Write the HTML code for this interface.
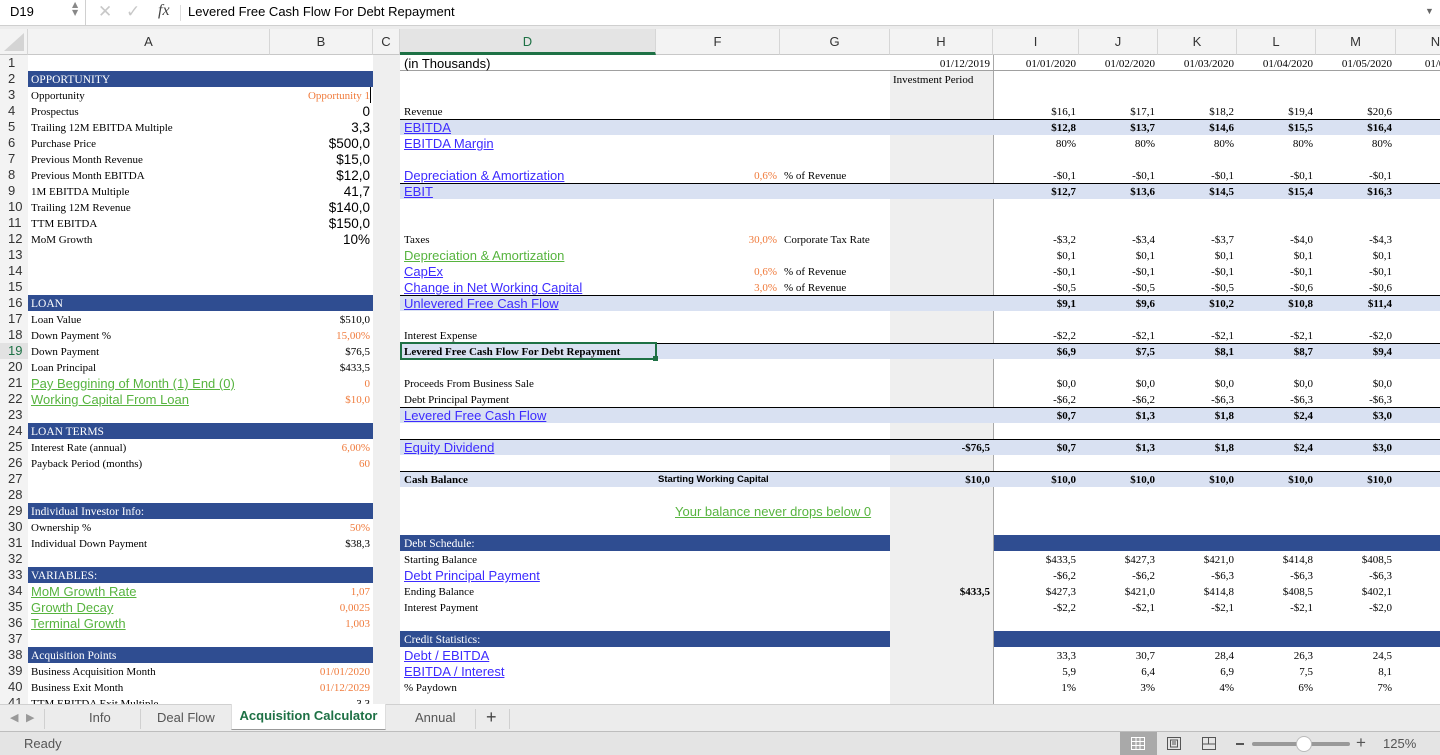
<!DOCTYPE html>
<html><head><meta charset="utf-8"><style>
*{margin:0;padding:0;box-sizing:border-box}
body{width:1440px;height:755px;overflow:hidden;position:relative;background:#fff;font-family:"Liberation Serif",serif;font-size:11px;color:#000}
.ab{position:absolute}
.rw{position:absolute;left:0;width:1440px;height:16px;line-height:16px}
.rw span{position:absolute;top:1px;white-space:nowrap}
.rw span.n{top:0}
.n{left:0;width:28px;padding-left:8px;font-family:"Liberation Sans",sans-serif;font-size:13px;color:#333;background:#f3f3f3}
.a{left:31px}
.bv{left:250px;width:120px;text-align:right}
.d{left:404px}
.h{left:890px;width:100px;text-align:right}
.i{left:976px;width:100px;text-align:right}
.j{left:1055px;width:100px;text-align:right}
.k{left:1134px;width:100px;text-align:right}
.l{left:1213px;width:100px;text-align:right}
.m{left:1292px;width:100px;text-align:right}
.nn{left:1375px;width:100px;text-align:right}
.fp{left:680px;width:97px;text-align:right;color:#f07b3c}
.fl{left:784px}
.s{font-family:"Liberation Sans",sans-serif;font-size:13.5px}
.lk{font-family:"Liberation Sans",sans-serif;font-size:13px;color:#3d2bff;text-decoration:underline}
.gl{font-family:"Liberation Sans",sans-serif;font-size:13px;color:#57b43f;text-decoration:underline}
.o{color:#f07b3c}
.w{color:#fff;font-size:11.5px}
.b{font-weight:bold}
.lb{position:absolute;height:16px;background:#d9e1f2;border-top:1px solid #000}
.db{position:absolute;height:16px;background:#2f4d91}
.ch{position:absolute;top:29px;height:26px;line-height:26px;text-align:center;font-family:"Liberation Sans",sans-serif;font-size:13px;color:#333;border-right:1px solid #d6d6d6;background:#f3f3f3;border-bottom:1px solid #c8c8c8}
</style></head><body>
<div class="ab" style="left:0;top:0;width:1440px;height:26px;background:#fff;border-bottom:1px solid #cfcfcf"></div>
<div class="ab" style="left:10px;top:4px;font-family:'Liberation Sans',sans-serif;font-size:13px">D19</div>
<div class="ab" style="left:72px;top:1px;font-size:8px;color:#888;line-height:8px;font-family:'DejaVu Sans',sans-serif">▲<br>▼</div>
<div class="ab" style="left:85px;top:0;width:1px;height:25px;background:#d0d0d0"></div>
<div class="ab" style="left:98px;top:2px;font-size:17px;color:#c8c8c8;font-family:'DejaVu Sans',sans-serif">✕</div>
<div class="ab" style="left:126px;top:2px;font-size:17px;color:#c8c8c8;font-family:'DejaVu Sans',sans-serif">✓</div>
<div class="ab" style="left:158px;top:2px;font-size:16px;font-style:italic;color:#444;font-family:'Liberation Serif',serif">fx</div>
<div class="ab" style="left:180px;top:5px;width:1px;height:16px;background:#ddd"></div>
<div class="ab" style="left:188px;top:4px;font-family:'Liberation Sans',sans-serif;font-size:13px">Levered Free Cash Flow For Debt Repayment</div>
<div class="ab" style="left:1425px;top:6px;font-size:9px;color:#666">▼</div>
<div class="ab" style="left:0;top:26px;width:1440px;height:3px;background:#ececec"></div>
<div class="ch" style="left:0;width:28px;background:#f3f3f3"></div>
<div class="ab" style="left:4px;top:33px;width:0;height:0;border-left:20px solid transparent;border-bottom:18px solid #d4d4d4"></div>
<div class="ch" style="left:28px;width:242px">A</div>
<div class="ch" style="left:270px;width:103px">B</div>
<div class="ch" style="left:373px;width:27px">C</div>
<div class="ch" style="left:400px;width:256px;color:#1e7145;border-bottom:3px solid #1e7145;background:#e4e4e4">D</div>
<div class="ch" style="left:656px;width:124px">F</div>
<div class="ch" style="left:780px;width:110px">G</div>
<div class="ch" style="left:890px;width:103px">H</div>
<div class="ch" style="left:993px;width:86px">I</div>
<div class="ch" style="left:1079px;width:79px">J</div>
<div class="ch" style="left:1158px;width:79px">K</div>
<div class="ch" style="left:1237px;width:79px">L</div>
<div class="ch" style="left:1316px;width:80px">M</div>
<div class="ch" style="left:1396px;width:80px">N</div>
<div class="ab" style="left:0;top:55px;width:28px;height:650px;background:#f3f3f3;border-right:1px solid #d0d0d0"></div>
<div class="ab" style="left:373px;top:55px;width:27px;height:650px;background:#efefef"></div>
<div class="ab" style="left:890px;top:71px;width:103px;height:634px;background:#efefef"></div>
<div class="ab" style="left:993px;top:55px;width:1px;height:650px;background:#a8a8a8"></div>
<div class="ab" style="left:400px;top:70px;width:1040px;height:1px;background:#a0a0a0"></div>
<div class="ab" style="left:370px;top:87px;width:1px;height:16px;background:#000"></div>
<div class="lb" style="left:400px;top:119px;width:1040px"></div>
<div class="lb" style="left:400px;top:183px;width:1040px"></div>
<div class="lb" style="left:400px;top:295px;width:1040px"></div>
<div class="lb" style="left:400px;top:343px;width:1040px"></div>
<div class="lb" style="left:400px;top:407px;width:1040px"></div>
<div class="lb" style="left:400px;top:439px;width:1040px"></div>
<div class="lb" style="left:400px;top:471px;width:1040px"></div>
<div class="db" style="left:28px;top:71px;width:345px"></div>
<div class="db" style="left:28px;top:295px;width:345px"></div>
<div class="db" style="left:28px;top:423px;width:345px"></div>
<div class="db" style="left:28px;top:503px;width:345px"></div>
<div class="db" style="left:28px;top:567px;width:345px"></div>
<div class="db" style="left:28px;top:647px;width:345px"></div>
<div class="db" style="left:400px;top:535px;width:490px"></div>
<div class="db" style="left:994px;top:535px;width:446px"></div>
<div class="db" style="left:400px;top:631px;width:490px"></div>
<div class="db" style="left:994px;top:631px;width:446px"></div>
<div class="ab" style="left:400px;top:342px;width:257px;height:18px;border:2px solid #1e7145"></div>
<div class="ab" style="left:653px;top:356px;width:5px;height:5px;background:#1e7145"></div>
<div class="ab" style="left:26px;top:343px;width:2px;height:16px;background:#1e7145"></div>

<div class="rw" style="top:55px"><span class="n">1</span><span class="d s" style="font-size:13px">(in Thousands)</span><span class="h">01/12/2019</span><span class="i">01/01/2020</span><span class="j">01/02/2020</span><span class="k">01/03/2020</span><span class="l">01/04/2020</span><span class="m">01/05/2020</span><span class="nn">01/06/2020</span></div>
<div class="rw" style="top:71px"><span class="n">2</span><span class="a w">OPPORTUNITY</span><span style="left:893px">Investment Period</span></div>
<div class="rw" style="top:87px"><span class="n">3</span><span class="a">Opportunity</span><span class="bv o">Opportunity 1</span></div>
<div class="rw" style="top:103px"><span class="n">4</span><span class="a">Prospectus</span><span class="bv s">0</span><span class="d">Revenue</span><span class="i">$16,1</span><span class="j">$17,1</span><span class="k">$18,2</span><span class="l">$19,4</span><span class="m">$20,6</span></div>
<div class="rw" style="top:119px"><span class="n">5</span><span class="a">Trailing 12M EBITDA Multiple</span><span class="bv s">3,3</span><span class="d lk">EBITDA</span><span class="i b">$12,8</span><span class="j b">$13,7</span><span class="k b">$14,6</span><span class="l b">$15,5</span><span class="m b">$16,4</span></div>
<div class="rw" style="top:135px"><span class="n">6</span><span class="a">Purchase Price</span><span class="bv s">$500,0</span><span class="d lk">EBITDA Margin</span><span class="i">80%</span><span class="j">80%</span><span class="k">80%</span><span class="l">80%</span><span class="m">80%</span></div>
<div class="rw" style="top:151px"><span class="n">7</span><span class="a">Previous Month Revenue</span><span class="bv s">$15,0</span></div>
<div class="rw" style="top:167px"><span class="n">8</span><span class="a">Previous Month EBITDA</span><span class="bv s">$12,0</span><span class="d lk">Depreciation &amp; Amortization</span><span class="fp">0,6%</span><span class="fl">% of Revenue</span><span class="i">-$0,1</span><span class="j">-$0,1</span><span class="k">-$0,1</span><span class="l">-$0,1</span><span class="m">-$0,1</span></div>
<div class="rw" style="top:183px"><span class="n">9</span><span class="a">1M EBITDA Multiple</span><span class="bv s">41,7</span><span class="d lk">EBIT</span><span class="i b">$12,7</span><span class="j b">$13,6</span><span class="k b">$14,5</span><span class="l b">$15,4</span><span class="m b">$16,3</span></div>
<div class="rw" style="top:199px"><span class="n">10</span><span class="a">Trailing 12M Revenue</span><span class="bv s">$140,0</span></div>
<div class="rw" style="top:215px"><span class="n">11</span><span class="a">TTM EBITDA</span><span class="bv s">$150,0</span></div>
<div class="rw" style="top:231px"><span class="n">12</span><span class="a">MoM Growth</span><span class="bv s">10%</span><span class="d">Taxes</span><span class="fp">30,0%</span><span class="fl">Corporate Tax Rate</span><span class="i">-$3,2</span><span class="j">-$3,4</span><span class="k">-$3,7</span><span class="l">-$4,0</span><span class="m">-$4,3</span></div>
<div class="rw" style="top:247px"><span class="n">13</span><span class="d gl">Depreciation &amp; Amortization</span><span class="i">$0,1</span><span class="j">$0,1</span><span class="k">$0,1</span><span class="l">$0,1</span><span class="m">$0,1</span></div>
<div class="rw" style="top:263px"><span class="n">14</span><span class="d lk">CapEx</span><span class="fp">0,6%</span><span class="fl">% of Revenue</span><span class="i">-$0,1</span><span class="j">-$0,1</span><span class="k">-$0,1</span><span class="l">-$0,1</span><span class="m">-$0,1</span></div>
<div class="rw" style="top:279px"><span class="n">15</span><span class="d lk">Change in Net Working Capital</span><span class="fp">3,0%</span><span class="fl">% of Revenue</span><span class="i">-$0,5</span><span class="j">-$0,5</span><span class="k">-$0,5</span><span class="l">-$0,6</span><span class="m">-$0,6</span></div>
<div class="rw" style="top:295px"><span class="n">16</span><span class="a w">LOAN</span><span class="d lk">Unlevered Free Cash Flow</span><span class="i b">$9,1</span><span class="j b">$9,6</span><span class="k b">$10,2</span><span class="l b">$10,8</span><span class="m b">$11,4</span></div>
<div class="rw" style="top:311px"><span class="n">17</span><span class="a">Loan Value</span><span class="bv">$510,0</span></div>
<div class="rw" style="top:327px"><span class="n">18</span><span class="a">Down Payment %</span><span class="bv o">15,00%</span><span class="d">Interest Expense</span><span class="i">-$2,2</span><span class="j">-$2,1</span><span class="k">-$2,1</span><span class="l">-$2,1</span><span class="m">-$2,0</span></div>
<div class="rw" style="top:343px"><span class="n" style="color:#1e7145;background:#e2e2e2">19</span><span class="a">Down Payment</span><span class="bv">$76,5</span><span class="d b">Levered Free Cash Flow For Debt Repayment</span><span class="i b">$6,9</span><span class="j b">$7,5</span><span class="k b">$8,1</span><span class="l b">$8,7</span><span class="m b">$9,4</span></div>
<div class="rw" style="top:359px"><span class="n">20</span><span class="a">Loan Principal</span><span class="bv">$433,5</span></div>
<div class="rw" style="top:375px"><span class="n">21</span><span class="a gl">Pay Beggining of Month (1) End (0)</span><span class="bv o">0</span><span class="d">Proceeds From Business Sale</span><span class="i">$0,0</span><span class="j">$0,0</span><span class="k">$0,0</span><span class="l">$0,0</span><span class="m">$0,0</span></div>
<div class="rw" style="top:391px"><span class="n">22</span><span class="a gl">Working Capital From Loan</span><span class="bv o">$10,0</span><span class="d">Debt Principal Payment</span><span class="i">-$6,2</span><span class="j">-$6,2</span><span class="k">-$6,3</span><span class="l">-$6,3</span><span class="m">-$6,3</span></div>
<div class="rw" style="top:407px"><span class="n">23</span><span class="d lk">Levered Free Cash Flow </span><span class="i b">$0,7</span><span class="j b">$1,3</span><span class="k b">$1,8</span><span class="l b">$2,4</span><span class="m b">$3,0</span></div>
<div class="rw" style="top:423px"><span class="n">24</span><span class="a w">LOAN TERMS</span></div>
<div class="rw" style="top:439px"><span class="n">25</span><span class="a">Interest Rate (annual)</span><span class="bv o">6,00%</span><span class="d lk">Equity Dividend</span><span class="h b">-$76,5</span><span class="i b">$0,7</span><span class="j b">$1,3</span><span class="k b">$1,8</span><span class="l b">$2,4</span><span class="m b">$3,0</span></div>
<div class="rw" style="top:455px"><span class="n">26</span><span class="a">Payback Period (months)</span><span class="bv o">60</span></div>
<div class="rw" style="top:471px"><span class="n">27</span><span class="d b">Cash Balance</span><span style="left:658px;font-family:'Liberation Sans',sans-serif;font-size:9.5px;font-weight:bold">Starting Working Capital</span><span class="h b">$10,0</span><span class="i b">$10,0</span><span class="j b">$10,0</span><span class="k b">$10,0</span><span class="l b">$10,0</span><span class="m b">$10,0</span></div>
<div class="rw" style="top:487px"><span class="n">28</span></div>
<div class="rw" style="top:503px"><span class="n">29</span><span class="a w">Individual Investor Info:</span><span class="gl" style="left:675px">Your balance never drops below 0</span></div>
<div class="rw" style="top:519px"><span class="n">30</span><span class="a">Ownership %</span><span class="bv o">50%</span></div>
<div class="rw" style="top:535px"><span class="n">31</span><span class="a">Individual Down Payment</span><span class="bv">$38,3</span><span class="d w">Debt Schedule:</span></div>
<div class="rw" style="top:551px"><span class="n">32</span><span class="d">Starting Balance</span><span class="i">$433,5</span><span class="j">$427,3</span><span class="k">$421,0</span><span class="l">$414,8</span><span class="m">$408,5</span></div>
<div class="rw" style="top:567px"><span class="n">33</span><span class="a w">VARIABLES:</span><span class="d lk">Debt Principal Payment</span><span class="i">-$6,2</span><span class="j">-$6,2</span><span class="k">-$6,3</span><span class="l">-$6,3</span><span class="m">-$6,3</span></div>
<div class="rw" style="top:583px"><span class="n">34</span><span class="a gl">MoM Growth Rate</span><span class="bv o">1,07</span><span class="d">Ending Balance</span><span class="h b">$433,5</span><span class="i">$427,3</span><span class="j">$421,0</span><span class="k">$414,8</span><span class="l">$408,5</span><span class="m">$402,1</span></div>
<div class="rw" style="top:599px"><span class="n">35</span><span class="a gl">Growth Decay</span><span class="bv o">0,0025</span><span class="d">Interest Payment</span><span class="i">-$2,2</span><span class="j">-$2,1</span><span class="k">-$2,1</span><span class="l">-$2,1</span><span class="m">-$2,0</span></div>
<div class="rw" style="top:615px"><span class="n">36</span><span class="a gl">Terminal Growth</span><span class="bv o">1,003</span></div>
<div class="rw" style="top:631px"><span class="n">37</span><span class="d w">Credit Statistics:</span></div>
<div class="rw" style="top:647px"><span class="n">38</span><span class="a w">Acquisition Points</span><span class="d lk">Debt / EBITDA</span><span class="i">33,3</span><span class="j">30,7</span><span class="k">28,4</span><span class="l">26,3</span><span class="m">24,5</span></div>
<div class="rw" style="top:663px"><span class="n">39</span><span class="a">Business Acquisition Month</span><span class="bv o">01/01/2020</span><span class="d lk">EBITDA / Interest</span><span class="i">5,9</span><span class="j">6,4</span><span class="k">6,9</span><span class="l">7,5</span><span class="m">8,1</span></div>
<div class="rw" style="top:679px"><span class="n">40</span><span class="a">Business Exit Month</span><span class="bv o">01/12/2029</span><span class="d">% Paydown</span><span class="i">1%</span><span class="j">3%</span><span class="k">4%</span><span class="l">6%</span><span class="m">7%</span></div>
<div class="rw" style="top:695px"><span class="n">41</span><span class="a">TTM EBITDA Exit Multiple</span><span class="bv">3,3</span></div>

<div class="ab" style="left:0;top:704px;width:1440px;height:28px;background:#ececec;border-top:1px solid #d0d0d0;border-bottom:1px solid #bdbdbd;font-family:'Liberation Sans',sans-serif;font-size:13px;color:#555">
<span class="ab" style="left:10px;top:6px;color:#999;font-size:11px">◀</span><span class="ab" style="left:26px;top:6px;color:#999;font-size:11px">▶</span>
<span class="ab" style="left:44px;top:4px;width:1px;height:20px;background:#d0d0d0"></span>
<span class="ab" style="left:89px;top:5px">Info</span>
<span class="ab" style="left:140px;top:4px;width:1px;height:20px;background:#d0d0d0"></span>
<span class="ab" style="left:157px;top:5px">Deal Flow</span>
<span class="ab" style="left:231px;top:-1px;width:155px;height:26px;background:#fff;border-bottom:1px solid #999;border-left:1px solid #ddd;border-right:1px solid #ddd;color:#1e7145;font-weight:bold;text-align:center;line-height:24px">Acquisition Calculator</span>
<span class="ab" style="left:415px;top:5px">Annual</span>
<span class="ab" style="left:475px;top:4px;width:1px;height:20px;background:#d0d0d0"></span>
<span class="ab" style="left:486px;top:2px;font-size:18px;color:#444">+</span>
<span class="ab" style="left:509px;top:4px;width:1px;height:20px;background:#d0d0d0"></span>
</div>
<div class="ab" style="left:0;top:732px;width:1440px;height:23px;background:#e4e4e4;font-family:'Liberation Sans',sans-serif;font-size:13px;color:#555">
<span class="ab" style="left:24px;top:4px">Ready</span>
<span class="ab" style="left:1120px;top:0;width:37px;height:23px;background:#a9a9a9"></span>
<svg class="ab" style="left:1131px;top:5px" width="14" height="13"><g stroke="#fff" fill="none"><rect x=".5" y=".5" width="13" height="12"/><path d="M5 1v11M9 1v11M1 4.5h12M1 8.5h12"/></g></svg>
<svg class="ab" style="left:1167px;top:5px" width="14" height="13"><g stroke="#555" fill="none"><rect x=".5" y=".5" width="13" height="12"/><rect x="3.5" y="3" width="7" height="7"/><path d="M5 5h4M5 7h4"/></g></svg>
<svg class="ab" style="left:1202px;top:5px" width="14" height="13"><g stroke="#555" fill="none"><rect x=".5" y=".5" width="13" height="12"/><path d="M6.5 1v6M1 7h12"/></g></svg>
<span class="ab" style="left:1236px;top:11px;width:8px;height:2px;background:#555"></span>
<span class="ab" style="left:1252px;top:10px;width:98px;height:4px;background:#999;border-radius:2px"></span>
<span class="ab" style="left:1296px;top:4px;width:16px;height:16px;background:#fff;border:1px solid #bbb;border-radius:50%"></span>
<span class="ab" style="left:1356px;top:1px;font-size:17px;color:#555">+</span>
<span class="ab" style="left:1383px;top:4px">125%</span>
</div>
</body></html>
